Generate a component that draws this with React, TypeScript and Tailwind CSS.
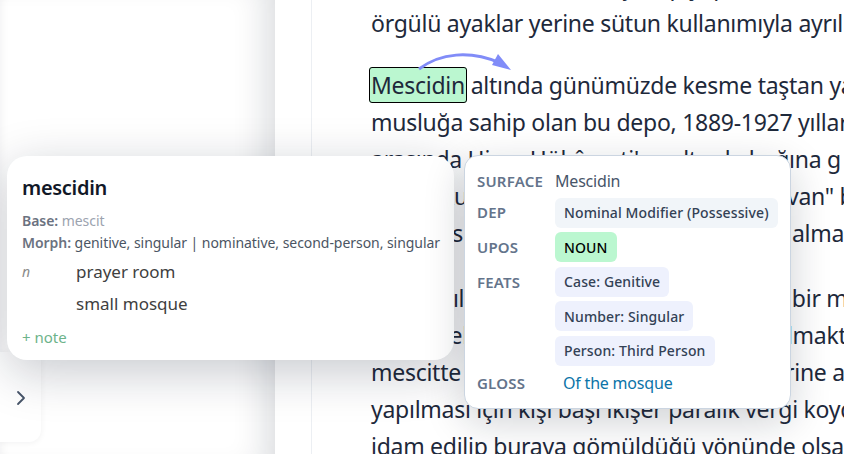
import { ChevronRight } from 'lucide-react';

const font = { fontFamily: '"Noto Sans", sans-serif' };

function Chip({ children, tone = 'bg-[#eef1fd] text-[#334155]' }: { children: React.ReactNode; tone?: string }) {
    return <span className={`h-[30px] px-[9px] rounded-[6px] flex items-center text-[14px] font-medium w-fit whitespace-nowrap tracking-[0.12px] ${tone}`}>{children}</span>;
}

function Label({ children }: { children: React.ReactNode }) {
    return <span className="text-[15px] font-semibold text-[#64748b] tracking-[0.2px] flex items-center">{children}</span>;
}

export default function App() {
    return (
        <div className="relative w-[844px] h-[454px] overflow-hidden bg-white flex" style={font}>
            <aside className="w-[275px] h-full shrink-0 bg-white shadow-[inset_-34px_0_34px_-26px_rgba(15,23,42,0.16),inset_9px_0_9px_-7px_rgba(15,23,42,0.05)] flex flex-col justify-end pb-3">
                <div className="w-[41px] h-[90px] bg-white rounded-br-xl shadow-[0_1px_6px_rgba(15,23,42,0.06)] flex items-end justify-end pb-[32px] pr-[8px]">
                    <ChevronRight size={24} strokeWidth={1.8} className="text-[#475569]" />
                </div>
            </aside>
            <main className="ml-[36px] flex-1 border-l border-[#eceff3] pl-[59px] text-[#1e293b] text-[23px] leading-[37px] whitespace-nowrap overflow-hidden -mt-[32px] tracking-[-0.27px]">
                <p className="mb-[25px]">
                    kemerlerle desteklenmiş olup yapının
                    <br />
                    örgülü ayaklar yerine sütun kullanımıyla ayrılır
                </p>
                <p className="mb-[28px]">
                    <span className="bg-[#bbf7d0] border border-black rounded-[3px] -mx-[2px] px-[1px] py-[1px]">Mescidin</span> altında günümüzde kesme taştan yapılmış
                    <br />
                    musluğa sahip olan bu depo, 1889-1927 yılları
                    <br />
                    arasında Hicaz Hükûmeti'ne altında bağına g
                    <br />
                    olarak kullanılmış ve halk arasında "Hayvan" b
                    <br />
                    eski bir su deposu olarak bilinir ve vergi alma
                </p>
                <p>
                    Osmanlılar döneminde yapının yanında bir m
                    <br />
                    eklenerek ibadete de açılmış olup anlatılmakta
                    <br />
                    mescitte de namazı kılan kişilerin her birine a
                    <br />
                    yapılması için kişi başı ikişer paralık vergi koydu
                    <br />
                    idam edilip buraya gömüldüğü yönünde olsa
                </p>
            </main>

            <svg className="absolute left-[410px] top-[46px]" width="110" height="30" viewBox="0 0 110 30" fill="none">
                <path d="M9 23 C30 7 60 4 90 17" stroke="#818cf8" strokeWidth="3" />
                <path d="M88 8 L101 24 L82 19 Z" fill="#818cf8" />
            </svg>

            <div className="absolute left-[7px] top-[156px] w-[447px] h-[204px] bg-white rounded-[20px] shadow-[0_12px_50px_rgba(15,23,42,0.23)] pl-[15px] pt-[19px]">
                <h2 className="text-[20px] leading-[26px] font-semibold text-[#111827] tracking-[-0.3px]">mescidin</h2>
                <div className="mt-[9px] text-[14px] leading-[22px] tracking-[-0.05px] whitespace-nowrap">
                    <p className="text-[#9ca3af]"><span className="font-semibold text-[#6b7280]">Base:</span> mescit</p>
                    <p className="text-[#4b5563]"><span className="font-semibold text-[#6b7280]">Morph:</span> genitive, singular | nominative, second-person, singular</p>
                </div>
                <div className="mt-[2px] grid grid-cols-[54px_1fr] text-[17px] leading-[32px] text-[#404040]">
                    <span className="italic text-[14px] text-[#8b8b8b]">n</span>
                    <span>prayer room</span>
                    <span />
                    <span>small mosque</span>
                </div>
                <p className="mt-[7px] text-[15px] leading-[20px] text-[#6db38a]">+ note</p>
            </div>

            <div className="absolute left-[464px] top-[155px] w-[327px] h-[254px] bg-white rounded-[14px] border border-[#cbd5e1] shadow-[0_12px_40px_rgba(15,23,42,0.2)] pl-[12px] pt-[13px]">
                <div className="grid grid-cols-[78px_1fr] gap-y-[4.6px]">
                    <Label>SURFACE</Label>
                    <span className="h-[24px] flex items-center text-[16px] text-[#475569] tracking-[-0.2px]">Mescidin</span>
                    <Label>DEP</Label>
                    <Chip tone="bg-[#f1f5f9] text-[#334155]">Nominal Modifier (Possessive)</Chip>
                    <Label>UPOS</Label>
                    <Chip tone="bg-[#bbf7d0] text-black">NOUN</Chip>
                    <span className="h-[30px] flex"><Label>FEATS</Label></span>
                    <div className="flex flex-col gap-[4.6px]">
                        <Chip>Case: Genitive</Chip>
                        <Chip>Number: Singular</Chip>
                        <Chip>Person: Third Person</Chip>
                    </div>
                    <Label>GLOSS</Label>
                    <span className="h-[25px] flex items-center pl-[8px] text-[16px] text-[#0b74a8] tracking-[-0.2px]">Of the mosque</span>
                </div>
            </div>
        </div>
    );
}
